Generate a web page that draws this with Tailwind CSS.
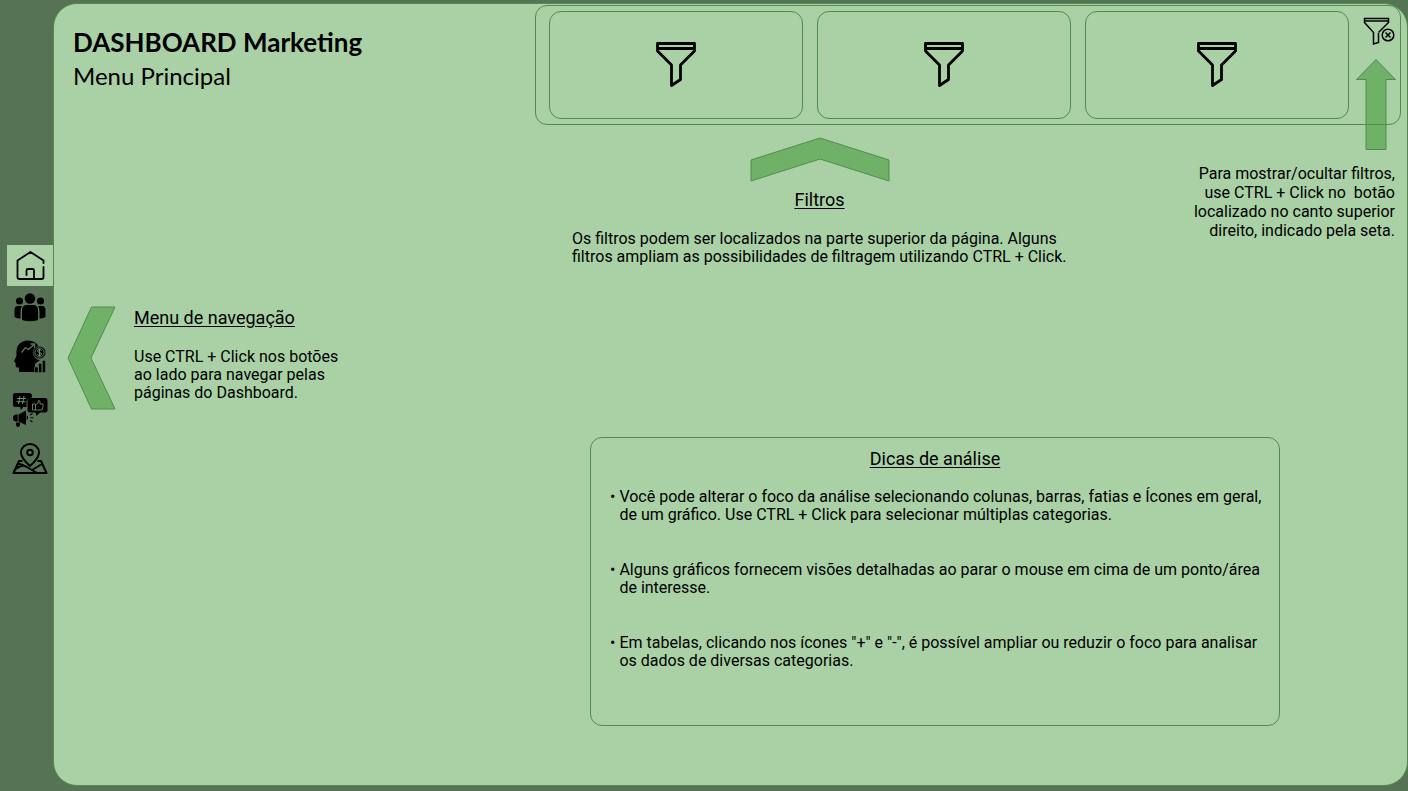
<!DOCTYPE html>
<html lang="pt-BR">
<head>
<meta charset="utf-8">
<title>DASHBOARD Marketing</title>
<script src="https://cdn.jsdelivr.net/npm/@tailwindcss/browser@4"></script>
</head>
<body class="bg-[#567455] font-['Roboto',sans-serif] text-base text-black">
<svg class="hidden" aria-hidden="true">
  <symbol id="funnel" viewBox="0 0 40 46">
    <path d="M1.500 1.500H38.500V9L24.500 23V37.500L15.500 43.500V23L1.500 9ZM1.500 6.500H38.500" fill="none" stroke="#000" stroke-width="2.800" stroke-linejoin="round"/>
  </symbol>
</svg>
<div class="flex min-h-screen">
  <nav aria-label="Menu de navegação" class="flex w-[53px] shrink-0 flex-col items-end pt-[245px]">
    <a href="#inicio" aria-label="Início" class="flex h-[41px] w-[46px] items-center justify-center bg-[#a9d1a5]">
      <svg class="h-8 w-8" viewBox="0 0 32 32" fill="none" stroke="#000" stroke-width="1.800" stroke-linecap="round" stroke-linejoin="round"><path d="M29.500 13V10.500L16.500 2L3.500 10.500V27Q3.500 29 5.500 29H27.500Q29.500 29 29.500 27V17"/><path d="M12.500 25V20.500Q12.500 19 14 19H18.500Q20 19 20 20.500V28.500"/></svg>
    </a>
    <a href="#clientes" aria-label="Clientes" class="flex h-[41px] w-[46px] items-center justify-center">
      <svg class="h-8 w-8" viewBox="0 0 32 32"><circle cx="16" cy="7.500" r="5.200"/><circle cx="5.500" cy="10" r="3.600"/><circle cx="26.500" cy="10" r="3.600"/><path d="M8 29V19.500Q8 14 13 14H19Q24 14 24 19.500V29Q16 31.500 8 29Z"/><path d="M.5 26V19Q.5 15 4 15H8Q6.500 17 6.500 20V27.500Q3 27.500 .5 26ZM31.500 26V19Q31.500 15 28 15H24Q25.500 17 25.500 20V27.500Q29 27.500 31.500 26Z"/></svg>
    </a>
    <a href="#vendas" aria-label="Vendas" class="mt-2 flex h-[41px] w-[46px] items-center justify-center">
      <svg class="h-[34px] w-8" viewBox="0 0 32 34"><path d="M5 33V28.500H3Q1 28 1.800 24.500L0 22L2.500 17Q1 2 14 1.500Q22 1.500 25 8Q18 11 20 17Q22 21 26 21L21 25V33Z"/><path d="M7.500 13.500L11.500 8.500L14.500 10.500L20 5.500M16.500 5H20.500V9" fill="none" stroke="#567455" stroke-width="1.300"/><circle cx="25.500" cy="13.500" r="6.300" stroke="#567455" stroke-width=".6"/><circle cx="25.500" cy="13.500" r="4.600" fill="none" stroke="#7d997b" stroke-width=".8"/><path d="M27.300 11.800Q27 10.500 25.500 10.500Q23.500 10.700 23.700 12.200Q24 13.300 25.500 13.500Q27.500 13.800 27.500 15Q27.300 16.500 25.500 16.500Q24 16.500 23.500 15.200M25.500 9.700V17.400" fill="none" stroke="#7d997b" stroke-width=".9"/><path d="M20.500 33.500V28H24V33.500ZM24.500 33.500V24.500H27.800V33.500ZM28.300 33.500V21.500H31.500V33.500Z" stroke="#567455" stroke-width=".6"/></svg>
    </a>
    <a href="#campanhas" aria-label="Campanhas" class="mt-[13px] flex h-[41px] w-[46px] items-center justify-center">
      <svg class="h-9 w-9" viewBox="0 0 36 36"><path d="M3 1H17Q20 1 20 4V5.500Q14.500 6 14.500 10V15H11L9 18L8 15H3Q1 15 1 13V3Q1 1 3 1Z"/><path d="M8 4L6.500 12M12 4L10.500 12M5 6.500H14M4.500 9.700H13.500" fill="none" stroke="#6e8b6c" stroke-width="1"/><path d="M18 6H33Q35.500 6 35.500 8.500V18Q35.500 20.500 33 20.500H28L24.500 24L23.500 20.500H18Q15.500 20.500 15.500 18V8.500Q15.500 6 18 6Z"/><path d="M20.500 12H23.500V18H20.500ZM23.500 13L26 11L26.500 8.500Q28 8.500 28 10V12H31V14.500L30 18H23.500" fill="none" stroke="#6e8b6c" stroke-width=".9"/><path d="M6.500 22.500L14 18.500V33L6.500 29.500ZM5.700 22.500V29.500H3.500Q1 29 1 26Q1 23 3.500 22.500ZM4 30.500H8V32.500Q8 35 6 35Q4 35 4 32.500Z"/><path d="M14.700 23Q17.500 25.700 14.700 28.500Z"/><path d="M18 23L20.500 21.500M18.500 25.700H21.500M18 28.500L20.500 30" fill="none" stroke="#000" stroke-width="1.100"/></svg>
    </a>
    <a href="#mapa" aria-label="Mapa" class="mt-2 flex h-[41px] w-[46px] items-center justify-center">
      <svg class="h-8 w-9" viewBox="0 0 36 32" fill="none" stroke="#000" stroke-width="2" stroke-linejoin="round"><path d="M18 23Q9 15 9 9.500A9 8.500 0 0 1 27 9.500Q27 15 18 23Z"/><circle cx="18" cy="9.500" r="2.800"/><path d="M10.500 18H7L1.500 30H34.500L29 18H25.500M2.500 27Q10 21 14 23.500L25 30M6 20.500L12 22.500M20 27L30 21"/></svg>
    </a>
  </nav>
  <main class="mt-[3px] mb-[5px] min-w-0 flex-1 rounded-[24px] border border-[#508c4c] bg-[#a9d1a5]">
    <header class="flex items-start justify-between pr-[6px] pl-[19px]">
      <div class="pt-5 font-['Lato',sans-serif]">
        <h1 class="text-[26px] leading-9 font-bold">DASHBOARD Marketing</h1>
        <p class="text-[24px] leading-8">Menu Principal</p>
      </div>
      <section aria-label="Filtros" class="relative mt-px flex h-[120px] w-[866px] justify-between rounded-xl border border-[#508c4c] py-[5px] pr-[5px] pl-[13px]">
        <div class="flex w-[254px] items-center justify-center rounded-xl border border-[#508c4c]"><svg class="h-[46px] w-10"><use href="#funnel"/></svg></div>
        <div class="flex w-[254px] items-center justify-center rounded-xl border border-[#508c4c]"><svg class="h-[46px] w-10"><use href="#funnel"/></svg></div>
        <div class="flex w-[264px] items-center justify-center rounded-xl border border-[#508c4c]"><svg class="h-[46px] w-10"><use href="#funnel"/></svg></div>
        <button type="button" aria-label="Mostrar ou ocultar filtros" class="mt-[5px] h-[30px] w-8">
          <svg class="h-[30px] w-8" viewBox="0 0 32 30" fill="none" stroke="#000" stroke-width="1.500"><path d="M15.500 17V26.500L10.500 28V16.500L1.500 6.500V2.500H25.500V6.500L15.500 16.500M1.500 5H25.500"/><circle cx="25" cy="19" r="5.800"/><path d="M22.500 16.500L27.500 21.500M27.500 16.500L22.500 21.500"/></svg>
        </button>
        <svg class="absolute top-[52px] right-[3px] h-[93px] w-[42px]" viewBox="0 0 42 93"><path d="M21 1.500L40.500 21.500H31V91.500H11V21.500H1.500Z" fill="#70b168" stroke="#508c4c"/><path d="M11 66.500H31" stroke="#508c4c"/></svg>
      </section>
    </header>
    <div class="flex justify-end gap-[108px] pr-3">
      <section class="w-[495px] pt-3">
        <svg class="mx-auto h-[45px] w-[140px]" viewBox="0 0 140 45"><path d="M1 23L70 1L139 23V44L70 22L1 44Z" fill="#70b168" stroke="#508c4c"/></svg>
        <h2 class="mt-[6px] text-center text-[18px] leading-6 underline underline-offset-2">Filtros</h2>
        <p class="mt-[18px] leading-[18px] whitespace-nowrap">Os filtros podem ser localizados na parte superior da página. Alguns<br>filtros ampliam as possibilidades de filtragem utilizando CTRL + Click.</p>
      </section>
      <p class="w-[220px] pt-[39px] text-right leading-[19px] whitespace-pre">Para mostrar/ocultar filtros,
use CTRL + Click no  botão
localizado no canto superior
direito, indicado pela seta.</p>
    </div>
    <section class="mt-10 flex gap-[18px] pl-[13px]">
      <svg class="h-[104px] w-[49px]" viewBox="0 0 49 104"><path d="M24.500 1H48L24 52L48 103H24.500L1 52Z" fill="#70b168" stroke="#508c4c"/></svg>
      <div>
        <h2 class="text-[18px] leading-6 underline underline-offset-2">Menu de navegação</h2>
        <p class="mt-[18px] leading-[18px]">Use CTRL + Click nos botões<br>ao lado para navegar pelas<br>páginas do Dashboard.</p>
      </div>
    </section>
    <section class="mt-[27px] mr-[127px] mb-[58px] ml-auto h-[289px] w-[690px] rounded-xl border border-[#508c4c] pt-[9px] pr-2 pl-[19px]">
      <h2 class="-ml-[11px] text-center text-[18px] leading-6 underline underline-offset-2">Dicas de análise</h2>
      <ul class="mt-[17px] flex flex-col gap-[37px] leading-[18px] whitespace-nowrap">
        <li class="flex gap-1"><span>•</span><span>Você pode alterar o foco da análise selecionando colunas, barras, fatias e Ícones em geral,<br>de um gráfico. Use CTRL + Click para selecionar múltiplas categorias.</span></li>
        <li class="flex gap-1"><span>•</span><span>Alguns gráficos fornecem visões detalhadas ao parar o mouse em cima de um ponto/área<br>de interesse.</span></li>
        <li class="flex gap-1"><span>•</span><span>Em tabelas, clicando nos ícones "+" e "-", é possível ampliar ou reduzir o foco para analisar<br>os dados de diversas categorias.</span></li>
      </ul>
    </section>
  </main>
</div>
</body>
</html>
